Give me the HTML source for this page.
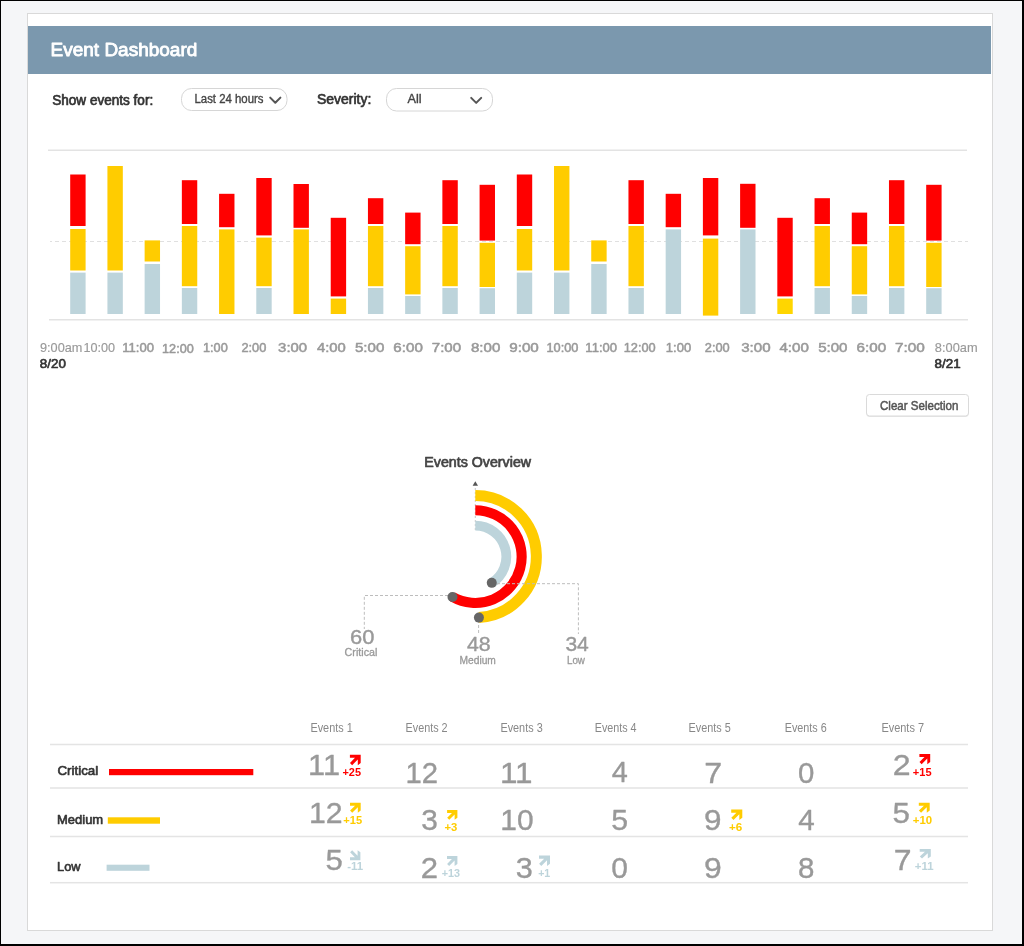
<!DOCTYPE html>
<html><head><meta charset="utf-8"><title>Event Dashboard</title>
<style>html,body{margin:0;padding:0;background:#f5f6f8;width:1024px;height:946px;overflow:hidden;font-family:"Liberation Sans", sans-serif}</style>
</head><body>
<svg width="1024" height="946" viewBox="0 0 1024 946" style="display:block;will-change:transform">
<rect x="0" y="0" width="1024" height="946" fill="#000"/>
<rect x="1" y="1" width="1021" height="943" fill="#f5f6f8"/>
<rect x="27.5" y="13.5" width="965" height="917" fill="#fff" stroke="#d9d9d9" stroke-width="1"/>
<rect x="28" y="26" width="963" height="48" fill="#7b98ae"/>
<g font-family="&quot;Liberation Sans&quot;, sans-serif">
<text x="50.54" y="55.70" font-size="17.8" fill="#fff" font-weight="normal" textLength="146.78" lengthAdjust="spacingAndGlyphs"  stroke="#fff" stroke-width="0.8" stroke-linejoin="round">Event Dashboard</text>
<text x="52.23" y="104.55" font-size="14.0" fill="#333" font-weight="normal" textLength="100.95" lengthAdjust="spacingAndGlyphs"  stroke="#333" stroke-width="0.7" stroke-linejoin="round">Show events for:</text>
<rect x="181.5" y="88.5" width="105.5" height="22" rx="10" fill="#fff" stroke="#d6d6d6"/>
<text x="194.49" y="103.03" font-size="12.3" fill="#444" font-weight="normal" textLength="69.00" lengthAdjust="spacingAndGlyphs"  stroke="#444" stroke-width="0.35" stroke-linejoin="round">Last 24 hours</text>
<path d="M270.2 97.6 L275.3 102.8 L280.4 97.6" fill="none" stroke="#555" stroke-width="2" stroke-linecap="round" stroke-linejoin="round"/>
<text x="317.02" y="104.25" font-size="14.0" fill="#333" font-weight="normal" textLength="54.31" lengthAdjust="spacingAndGlyphs"  stroke="#333" stroke-width="0.7" stroke-linejoin="round">Severity:</text>
<rect x="386.5" y="88.5" width="106" height="22.5" rx="10" fill="#fff" stroke="#d6d6d6"/>
<text x="407.50" y="103.33" font-size="12.3" fill="#444" font-weight="normal" textLength="14.13" lengthAdjust="spacingAndGlyphs"  stroke="#444" stroke-width="0.35" stroke-linejoin="round">All</text>
<path d="M471.2 97.9 L476.2 102.9 L481.2 97.9" fill="none" stroke="#555" stroke-width="2" stroke-linecap="round" stroke-linejoin="round"/>
<rect x="48" y="149.5" width="919" height="1.5" fill="#e3e3e3"/>
<line x1="50" y1="241.5" x2="968" y2="241.5" stroke="#e0e0e0" stroke-width="1" stroke-dasharray="4 3" stroke-dashoffset="2"/>
<rect x="49" y="319" width="919" height="1.5" fill="#e3e3e3"/>
<rect x="70.20" y="174.5" width="15.4" height="51.50" fill="#ff0000"/>
<rect x="70.20" y="229" width="15.4" height="41.50" fill="#ffcc00"/>
<rect x="70.20" y="272.6" width="15.4" height="41.40" fill="#bdd4db"/>
<rect x="107.42" y="166" width="15.4" height="104.50" fill="#ffcc00"/>
<rect x="107.42" y="272.6" width="15.4" height="41.40" fill="#bdd4db"/>
<rect x="144.63" y="240.4" width="15.4" height="21.10" fill="#ffcc00"/>
<rect x="144.63" y="264" width="15.4" height="50.00" fill="#bdd4db"/>
<rect x="181.85" y="180.2" width="15.4" height="43.80" fill="#ff0000"/>
<rect x="181.85" y="226" width="15.4" height="60.20" fill="#ffcc00"/>
<rect x="181.85" y="288" width="15.4" height="26.00" fill="#bdd4db"/>
<rect x="219.07" y="193.8" width="15.4" height="33.40" fill="#ff0000"/>
<rect x="219.07" y="229.4" width="15.4" height="84.60" fill="#ffcc00"/>
<rect x="256.28" y="178" width="15.4" height="57.40" fill="#ff0000"/>
<rect x="256.28" y="237.6" width="15.4" height="48.60" fill="#ffcc00"/>
<rect x="256.28" y="288" width="15.4" height="26.00" fill="#bdd4db"/>
<rect x="293.50" y="184" width="15.4" height="43.80" fill="#ff0000"/>
<rect x="293.50" y="229.4" width="15.4" height="84.60" fill="#ffcc00"/>
<rect x="330.72" y="217.8" width="15.4" height="78.60" fill="#ff0000"/>
<rect x="330.72" y="298.6" width="15.4" height="15.40" fill="#ffcc00"/>
<rect x="367.94" y="198.2" width="15.4" height="25.80" fill="#ff0000"/>
<rect x="367.94" y="226" width="15.4" height="60.20" fill="#ffcc00"/>
<rect x="367.94" y="288" width="15.4" height="26.00" fill="#bdd4db"/>
<rect x="405.15" y="212.6" width="15.4" height="31.60" fill="#ff0000"/>
<rect x="405.15" y="246.2" width="15.4" height="48.20" fill="#ffcc00"/>
<rect x="405.15" y="296" width="15.4" height="18.00" fill="#bdd4db"/>
<rect x="442.37" y="180.2" width="15.4" height="43.80" fill="#ff0000"/>
<rect x="442.37" y="226" width="15.4" height="60.20" fill="#ffcc00"/>
<rect x="442.37" y="288" width="15.4" height="26.00" fill="#bdd4db"/>
<rect x="479.59" y="184.8" width="15.4" height="55.80" fill="#ff0000"/>
<rect x="479.59" y="242.8" width="15.4" height="44.20" fill="#ffcc00"/>
<rect x="479.59" y="288.2" width="15.4" height="25.80" fill="#bdd4db"/>
<rect x="516.80" y="174.5" width="15.4" height="51.50" fill="#ff0000"/>
<rect x="516.80" y="229" width="15.4" height="41.50" fill="#ffcc00"/>
<rect x="516.80" y="272.6" width="15.4" height="41.40" fill="#bdd4db"/>
<rect x="554.02" y="166" width="15.4" height="104.50" fill="#ffcc00"/>
<rect x="554.02" y="272.6" width="15.4" height="41.40" fill="#bdd4db"/>
<rect x="591.24" y="240.4" width="15.4" height="21.10" fill="#ffcc00"/>
<rect x="591.24" y="264" width="15.4" height="50.00" fill="#bdd4db"/>
<rect x="628.46" y="180.2" width="15.4" height="43.80" fill="#ff0000"/>
<rect x="628.46" y="226" width="15.4" height="60.20" fill="#ffcc00"/>
<rect x="628.46" y="288" width="15.4" height="26.00" fill="#bdd4db"/>
<rect x="665.67" y="193.8" width="15.4" height="33.40" fill="#ff0000"/>
<rect x="665.67" y="229.4" width="15.4" height="84.60" fill="#bdd4db"/>
<rect x="702.89" y="178" width="15.4" height="57.40" fill="#ff0000"/>
<rect x="702.89" y="238.6" width="15.4" height="77.00" fill="#ffcc00"/>
<rect x="740.11" y="183.8" width="15.4" height="44.00" fill="#ff0000"/>
<rect x="740.11" y="229.4" width="15.4" height="84.60" fill="#bdd4db"/>
<rect x="777.32" y="217.8" width="15.4" height="78.60" fill="#ff0000"/>
<rect x="777.32" y="298.6" width="15.4" height="15.40" fill="#ffd600"/>
<rect x="814.54" y="198.2" width="15.4" height="25.80" fill="#ff0000"/>
<rect x="814.54" y="226" width="15.4" height="60.20" fill="#ffcc00"/>
<rect x="814.54" y="288" width="15.4" height="26.00" fill="#bdd4db"/>
<rect x="851.76" y="212.6" width="15.4" height="31.60" fill="#ff0000"/>
<rect x="851.76" y="246.2" width="15.4" height="48.20" fill="#ffcc00"/>
<rect x="851.76" y="296" width="15.4" height="18.00" fill="#bdd4db"/>
<rect x="888.97" y="180.2" width="15.4" height="43.80" fill="#ff0000"/>
<rect x="888.97" y="226" width="15.4" height="60.20" fill="#ffcc00"/>
<rect x="888.97" y="288" width="15.4" height="26.00" fill="#bdd4db"/>
<rect x="926.19" y="184.8" width="15.4" height="55.80" fill="#ff0000"/>
<rect x="926.19" y="242.8" width="15.4" height="44.20" fill="#ffcc00"/>
<rect x="926.19" y="288.2" width="15.4" height="25.80" fill="#bdd4db"/>
<text x="40.03" y="352.12" font-size="12.4" fill="#9a9a9a" font-weight="normal" textLength="42.38" lengthAdjust="spacingAndGlyphs"  stroke="#9a9a9a" stroke-width="0.15" stroke-linejoin="round">9:00am</text>
<text x="83.56" y="352.12" font-size="12.4" fill="#9a9a9a" font-weight="normal" textLength="31.61" lengthAdjust="spacingAndGlyphs"  stroke="#9a9a9a" stroke-width="0.15" stroke-linejoin="round">10:00</text>
<text x="122.18" y="351.95" font-size="12.4" fill="#999" font-weight="normal" textLength="31.76" lengthAdjust="spacingAndGlyphs"  stroke="#999" stroke-width="0.5" stroke-linejoin="round">11:00</text>
<text x="162.09" y="353.15" font-size="12.4" fill="#999" font-weight="normal" textLength="31.66" lengthAdjust="spacingAndGlyphs"  stroke="#999" stroke-width="0.5" stroke-linejoin="round">12:00</text>
<text x="202.98" y="351.95" font-size="12.4" fill="#999" font-weight="normal" textLength="24.77" lengthAdjust="spacingAndGlyphs"  stroke="#999" stroke-width="0.5" stroke-linejoin="round">1:00</text>
<text x="241.41" y="351.95" font-size="12.4" fill="#999" font-weight="normal" textLength="24.95" lengthAdjust="spacingAndGlyphs"  stroke="#999" stroke-width="0.5" stroke-linejoin="round">2:00</text>
<text x="278.08" y="351.95" font-size="12.4" fill="#999" font-weight="normal" textLength="29.05" lengthAdjust="spacingAndGlyphs"  stroke="#999" stroke-width="0.5" stroke-linejoin="round">3:00</text>
<text x="316.91" y="351.95" font-size="12.4" fill="#999" font-weight="normal" textLength="28.82" lengthAdjust="spacingAndGlyphs"  stroke="#999" stroke-width="0.5" stroke-linejoin="round">4:00</text>
<text x="354.95" y="351.95" font-size="12.4" fill="#999" font-weight="normal" textLength="29.39" lengthAdjust="spacingAndGlyphs"  stroke="#999" stroke-width="0.5" stroke-linejoin="round">5:00</text>
<text x="393.38" y="351.95" font-size="12.4" fill="#999" font-weight="normal" textLength="29.46" lengthAdjust="spacingAndGlyphs"  stroke="#999" stroke-width="0.5" stroke-linejoin="round">6:00</text>
<text x="431.78" y="351.95" font-size="12.4" fill="#999" font-weight="normal" textLength="29.36" lengthAdjust="spacingAndGlyphs"  stroke="#999" stroke-width="0.5" stroke-linejoin="round">7:00</text>
<text x="470.99" y="351.95" font-size="12.4" fill="#999" font-weight="normal" textLength="29.34" lengthAdjust="spacingAndGlyphs"  stroke="#999" stroke-width="0.5" stroke-linejoin="round">8:00</text>
<text x="509.24" y="351.95" font-size="12.4" fill="#999" font-weight="normal" textLength="29.61" lengthAdjust="spacingAndGlyphs"  stroke="#999" stroke-width="0.5" stroke-linejoin="round">9:00</text>
<text x="546.48" y="351.95" font-size="12.4" fill="#999" font-weight="normal" textLength="31.97" lengthAdjust="spacingAndGlyphs"  stroke="#999" stroke-width="0.5" stroke-linejoin="round">10:00</text>
<text x="585.39" y="351.95" font-size="12.4" fill="#999" font-weight="normal" textLength="31.66" lengthAdjust="spacingAndGlyphs"  stroke="#999" stroke-width="0.5" stroke-linejoin="round">11:00</text>
<text x="623.78" y="351.95" font-size="12.4" fill="#999" font-weight="normal" textLength="31.97" lengthAdjust="spacingAndGlyphs"  stroke="#999" stroke-width="0.5" stroke-linejoin="round">12:00</text>
<text x="665.76" y="351.95" font-size="12.4" fill="#999" font-weight="normal" textLength="25.40" lengthAdjust="spacingAndGlyphs"  stroke="#999" stroke-width="0.5" stroke-linejoin="round">1:00</text>
<text x="704.81" y="351.95" font-size="12.4" fill="#999" font-weight="normal" textLength="24.95" lengthAdjust="spacingAndGlyphs"  stroke="#999" stroke-width="0.5" stroke-linejoin="round">2:00</text>
<text x="741.18" y="351.95" font-size="12.4" fill="#999" font-weight="normal" textLength="29.36" lengthAdjust="spacingAndGlyphs"  stroke="#999" stroke-width="0.5" stroke-linejoin="round">3:00</text>
<text x="779.40" y="351.95" font-size="12.4" fill="#999" font-weight="normal" textLength="29.44" lengthAdjust="spacingAndGlyphs"  stroke="#999" stroke-width="0.5" stroke-linejoin="round">4:00</text>
<text x="818.15" y="351.95" font-size="12.4" fill="#999" font-weight="normal" textLength="29.39" lengthAdjust="spacingAndGlyphs"  stroke="#999" stroke-width="0.5" stroke-linejoin="round">5:00</text>
<text x="856.58" y="351.95" font-size="12.4" fill="#999" font-weight="normal" textLength="29.67" lengthAdjust="spacingAndGlyphs"  stroke="#999" stroke-width="0.5" stroke-linejoin="round">6:00</text>
<text x="894.96" y="351.95" font-size="12.4" fill="#999" font-weight="normal" textLength="29.89" lengthAdjust="spacingAndGlyphs"  stroke="#999" stroke-width="0.5" stroke-linejoin="round">7:00</text>
<text x="934.87" y="352.12" font-size="12.4" fill="#9a9a9a" font-weight="normal" textLength="42.75" lengthAdjust="spacingAndGlyphs"  stroke="#9a9a9a" stroke-width="0.15" stroke-linejoin="round">8:00am</text>
<text x="39.79" y="367.68" font-size="12.8" fill="#333" font-weight="normal" textLength="26.05" lengthAdjust="spacingAndGlyphs"  stroke="#333" stroke-width="0.65" stroke-linejoin="round">8/20</text>
<text x="934.59" y="367.68" font-size="12.8" fill="#333" font-weight="normal" textLength="26.09" lengthAdjust="spacingAndGlyphs"  stroke="#333" stroke-width="0.65" stroke-linejoin="round">8/21</text>
<rect x="866.5" y="395" width="102" height="22" rx="3" fill="#e8e8e8"/>
<rect x="866.5" y="394.5" width="102" height="21.5" rx="3" fill="#fff" stroke="#dadada"/>
<text x="879.96" y="410.05" font-size="12.6" fill="#555" font-weight="normal" textLength="78.44" lengthAdjust="spacingAndGlyphs"  stroke="#555" stroke-width="0.5" stroke-linejoin="round">Clear Selection</text>
<text x="424.28" y="466.65" font-size="14.0" fill="#444" font-weight="normal" textLength="106.83" lengthAdjust="spacingAndGlyphs"  stroke="#444" stroke-width="0.7" stroke-linejoin="round">Events Overview</text>
<line x1="475.3" y1="488" x2="475.3" y2="531" stroke="#c8c8c8" stroke-width="1" stroke-dasharray="2 2"/>
<path d="M475.3 481.3 L478 485.7 L472.6 485.7 Z" fill="#555"/>
<path d="M475.3 495.50 A61.1 61.1 0 0 1 478.92 617.59" fill="none" stroke="#ffcc00" stroke-width="11"/>
<path d="M475.3 510.25 A46.35 46.35 0 1 1 452.48 596.94" fill="none" stroke="#ff0000" stroke-width="10.1"/>
<path d="M475.3 525.60 A31 31 0 0 1 491.77 582.86" fill="none" stroke="#bdd4db" stroke-width="9.8"/>
<path d="M448 595.5 H364.3 V629" fill="none" stroke="#bdbdbd" stroke-width="1" stroke-dasharray="3 2"/>
<path d="M497 583.7 H578.4 V634" fill="none" stroke="#bdbdbd" stroke-width="1" stroke-dasharray="3 2"/>
<path d="M478.6 620 V634" fill="none" stroke="#bdbdbd" stroke-width="1" stroke-dasharray="3 2"/>
<circle cx="478.92" cy="617.59" r="5" fill="#666"/>
<circle cx="452.48" cy="596.94" r="5" fill="#666"/>
<circle cx="491.77" cy="582.86" r="5" fill="#666"/>
<text x="350.09" y="644.20" font-size="20.4" fill="#999" font-weight="normal" textLength="24.37" lengthAdjust="spacingAndGlyphs"  stroke="#999" stroke-width="0.4" stroke-linejoin="round">60</text>
<text x="344.61" y="656.25" font-size="10.5" fill="#999" font-weight="normal" textLength="32.76" lengthAdjust="spacingAndGlyphs"  stroke="#999" stroke-width="0.3" stroke-linejoin="round">Critical</text>
<text x="466.91" y="651.10" font-size="20.4" fill="#999" font-weight="normal" textLength="23.72" lengthAdjust="spacingAndGlyphs"  stroke="#999" stroke-width="0.4" stroke-linejoin="round">48</text>
<text x="459.51" y="663.55" font-size="10.5" fill="#999" font-weight="normal" textLength="36.41" lengthAdjust="spacingAndGlyphs"  stroke="#999" stroke-width="0.3" stroke-linejoin="round">Medium</text>
<text x="565.40" y="651.10" font-size="20.4" fill="#999" font-weight="normal" textLength="23.42" lengthAdjust="spacingAndGlyphs"  stroke="#999" stroke-width="0.4" stroke-linejoin="round">34</text>
<text x="566.95" y="663.85" font-size="10.5" fill="#999" font-weight="normal" textLength="17.98" lengthAdjust="spacingAndGlyphs"  stroke="#999" stroke-width="0.3" stroke-linejoin="round">Low</text>
<rect x="50" y="743.75" width="918" height="1.5" fill="#e4e4e4"/>
<rect x="50" y="787.25" width="918" height="1.5" fill="#e4e4e4"/>
<rect x="50" y="835.75" width="918" height="1.5" fill="#e4e4e4"/>
<rect x="50" y="881.95" width="918" height="1.5" fill="#e4e4e4"/>
<text x="310.41" y="731.90" font-size="12" fill="#888" font-weight="normal" textLength="42.32" lengthAdjust="spacingAndGlyphs" >Events 1</text>
<text x="405.51" y="731.90" font-size="12" fill="#888" font-weight="normal" textLength="42.13" lengthAdjust="spacingAndGlyphs" >Events 2</text>
<text x="500.41" y="731.90" font-size="12" fill="#888" font-weight="normal" textLength="42.27" lengthAdjust="spacingAndGlyphs" >Events 3</text>
<text x="594.72" y="731.90" font-size="12" fill="#888" font-weight="normal" textLength="41.90" lengthAdjust="spacingAndGlyphs" >Events 4</text>
<text x="688.51" y="731.90" font-size="12" fill="#888" font-weight="normal" textLength="42.25" lengthAdjust="spacingAndGlyphs" >Events 5</text>
<text x="784.71" y="731.90" font-size="12" fill="#888" font-weight="normal" textLength="42.06" lengthAdjust="spacingAndGlyphs" >Events 6</text>
<text x="881.40" y="731.90" font-size="12" fill="#888" font-weight="normal" textLength="42.65" lengthAdjust="spacingAndGlyphs" >Events 7</text>
<text x="57.40" y="774.88" font-size="13.3" fill="#333" font-weight="normal" textLength="40.82" lengthAdjust="spacingAndGlyphs"  stroke="#333" stroke-width="0.65" stroke-linejoin="round">Critical</text>
<text x="57.01" y="823.67" font-size="13.3" fill="#333" font-weight="normal" textLength="46.17" lengthAdjust="spacingAndGlyphs"  stroke="#333" stroke-width="0.65" stroke-linejoin="round">Medium</text>
<text x="57.03" y="870.88" font-size="13.3" fill="#333" font-weight="normal" textLength="23.47" lengthAdjust="spacingAndGlyphs"  stroke="#333" stroke-width="0.65" stroke-linejoin="round">Low</text>
<rect x="109" y="769" width="144.3" height="6.2" fill="#ff0000"/>
<rect x="107.8" y="817.3" width="52.2" height="6.4" fill="#ffcc00"/>
<rect x="106.6" y="864.7" width="42.9" height="6.1" fill="#bdd4db"/>
<text x="308.14" y="775.43" font-size="29.6" fill="#999" font-weight="normal" textLength="31.94" lengthAdjust="spacingAndGlyphs"  stroke="#999" stroke-width="0.35" stroke-linejoin="round">11</text>
<text x="405.50" y="782.73" font-size="29.6" fill="#999" font-weight="normal" textLength="32.55" lengthAdjust="spacingAndGlyphs"  stroke="#999" stroke-width="0.35" stroke-linejoin="round">12</text>
<text x="499.99" y="782.73" font-size="29.6" fill="#999" font-weight="normal" textLength="32.62" lengthAdjust="spacingAndGlyphs"  stroke="#999" stroke-width="0.35" stroke-linejoin="round">11</text>
<text x="611.76" y="782.43" font-size="29.6" fill="#999" font-weight="normal" textLength="16.06" lengthAdjust="spacingAndGlyphs"  stroke="#999" stroke-width="0.35" stroke-linejoin="round">4</text>
<text x="704.27" y="782.83" font-size="29.6" fill="#999" font-weight="normal" textLength="17.92" lengthAdjust="spacingAndGlyphs"  stroke="#999" stroke-width="0.35" stroke-linejoin="round">7</text>
<text x="797.98" y="782.83" font-size="29.6" fill="#999" font-weight="normal" textLength="16.35" lengthAdjust="spacingAndGlyphs"  stroke="#999" stroke-width="0.35" stroke-linejoin="round">0</text>
<text x="892.81" y="775.43" font-size="29.6" fill="#999" font-weight="normal" textLength="17.88" lengthAdjust="spacingAndGlyphs"  stroke="#999" stroke-width="0.35" stroke-linejoin="round">2</text>
<text x="309.02" y="823.43" font-size="29.6" fill="#999" font-weight="normal" textLength="33.68" lengthAdjust="spacingAndGlyphs"  stroke="#999" stroke-width="0.35" stroke-linejoin="round">12</text>
<text x="421.29" y="830.03" font-size="29.6" fill="#999" font-weight="normal" textLength="16.60" lengthAdjust="spacingAndGlyphs"  stroke="#999" stroke-width="0.35" stroke-linejoin="round">3</text>
<text x="500.34" y="830.23" font-size="29.6" fill="#999" font-weight="normal" textLength="33.30" lengthAdjust="spacingAndGlyphs"  stroke="#999" stroke-width="0.35" stroke-linejoin="round">10</text>
<text x="611.21" y="829.83" font-size="29.6" fill="#999" font-weight="normal" textLength="16.83" lengthAdjust="spacingAndGlyphs"  stroke="#999" stroke-width="0.35" stroke-linejoin="round">5</text>
<text x="703.95" y="829.83" font-size="29.6" fill="#999" font-weight="normal" textLength="17.52" lengthAdjust="spacingAndGlyphs"  stroke="#999" stroke-width="0.35" stroke-linejoin="round">9</text>
<text x="798.14" y="829.83" font-size="29.6" fill="#999" font-weight="normal" textLength="16.50" lengthAdjust="spacingAndGlyphs"  stroke="#999" stroke-width="0.35" stroke-linejoin="round">4</text>
<text x="892.57" y="823.43" font-size="29.6" fill="#999" font-weight="normal" textLength="17.42" lengthAdjust="spacingAndGlyphs"  stroke="#999" stroke-width="0.35" stroke-linejoin="round">5</text>
<text x="325.58" y="870.23" font-size="29.6" fill="#999" font-weight="normal" textLength="17.30" lengthAdjust="spacingAndGlyphs"  stroke="#999" stroke-width="0.35" stroke-linejoin="round">5</text>
<text x="420.86" y="877.62" font-size="29.6" fill="#999" font-weight="normal" textLength="17.27" lengthAdjust="spacingAndGlyphs"  stroke="#999" stroke-width="0.35" stroke-linejoin="round">2</text>
<text x="515.76" y="877.62" font-size="29.6" fill="#999" font-weight="normal" textLength="17.07" lengthAdjust="spacingAndGlyphs"  stroke="#999" stroke-width="0.35" stroke-linejoin="round">3</text>
<text x="611.25" y="877.62" font-size="29.6" fill="#999" font-weight="normal" textLength="16.70" lengthAdjust="spacingAndGlyphs"  stroke="#999" stroke-width="0.35" stroke-linejoin="round">0</text>
<text x="703.93" y="877.62" font-size="29.6" fill="#999" font-weight="normal" textLength="17.76" lengthAdjust="spacingAndGlyphs"  stroke="#999" stroke-width="0.35" stroke-linejoin="round">9</text>
<text x="798.04" y="877.62" font-size="29.6" fill="#999" font-weight="normal" textLength="16.42" lengthAdjust="spacingAndGlyphs"  stroke="#999" stroke-width="0.35" stroke-linejoin="round">8</text>
<text x="893.78" y="870.23" font-size="29.6" fill="#999" font-weight="normal" textLength="17.80" lengthAdjust="spacingAndGlyphs"  stroke="#999" stroke-width="0.35" stroke-linejoin="round">7</text>
<polygon points="349.90,754.70 360.70,754.70 360.70,763.00 357.80,765.20 357.80,759.39 352.15,765.20 349.99,762.98 354.97,757.85 349.90,757.85" fill="#ff0000"/>
<text x="342.44" y="775.60" font-size="10.4" fill="#ff0000" font-weight="bold" textLength="18.56" lengthAdjust="spacingAndGlyphs" >+25</text>
<polygon points="350.00,802.80 360.70,802.80 360.70,810.62 357.82,812.70 357.82,807.23 352.23,812.70 350.09,810.61 355.03,805.77 350.00,805.77" fill="#ffcc00"/>
<text x="343.33" y="823.80" font-size="10.4" fill="#ffcc00" font-weight="bold" textLength="18.88" lengthAdjust="spacingAndGlyphs" >+15</text>
<polygon points="350.00,860.30 360.40,860.30 360.40,852.32 357.60,850.20 357.60,855.79 352.17,850.20 350.09,852.33 354.89,857.27 350.00,857.27" fill="#bdd4db"/>
<text x="347.17" y="870.40" font-size="10.4" fill="#bdd4db" font-weight="bold" textLength="15.94" lengthAdjust="spacingAndGlyphs" >-11</text>
<polygon points="447.10,810.00 457.40,810.00 457.40,817.74 454.63,819.80 454.63,814.38 449.25,819.80 447.19,817.73 451.94,812.94 447.10,812.94" fill="#ffcc00"/>
<text x="444.53" y="830.80" font-size="10.4" fill="#ffcc00" font-weight="bold" textLength="12.88" lengthAdjust="spacingAndGlyphs" >+3</text>
<polygon points="447.00,856.10 457.40,856.10 457.40,863.92 454.60,866.00 454.60,860.53 449.17,866.00 447.09,863.91 451.89,859.07 447.00,859.07" fill="#bdd4db"/>
<text x="441.65" y="877.00" font-size="10.4" fill="#bdd4db" font-weight="bold" textLength="18.34" lengthAdjust="spacingAndGlyphs" >+13</text>
<polygon points="539.00,855.50 550.00,855.50 550.00,863.79 547.04,866.00 547.04,860.19 541.29,866.00 539.09,863.78 544.17,858.65 539.00,858.65" fill="#bdd4db"/>
<text x="538.15" y="877.00" font-size="10.4" fill="#bdd4db" font-weight="bold" textLength="12.14" lengthAdjust="spacingAndGlyphs" >+1</text>
<polygon points="731.20,809.50 742.30,809.50 742.30,817.79 739.32,820.00 739.32,814.19 733.51,820.00 731.29,817.78 736.41,812.65 731.20,812.65" fill="#ffcc00"/>
<text x="729.01" y="830.80" font-size="10.4" fill="#ffcc00" font-weight="bold" textLength="13.31" lengthAdjust="spacingAndGlyphs" >+6</text>
<polygon points="919.40,754.00 930.20,754.00 930.20,762.06 927.30,764.20 927.30,758.56 921.65,764.20 919.49,762.05 924.47,757.06 919.40,757.06" fill="#ff0000"/>
<text x="912.84" y="775.60" font-size="10.4" fill="#ff0000" font-weight="bold" textLength="18.77" lengthAdjust="spacingAndGlyphs" >+15</text>
<polygon points="918.80,802.70 929.70,802.70 929.70,810.60 926.77,812.70 926.77,807.17 921.07,812.70 918.89,810.59 923.92,805.70 918.80,805.70" fill="#ffcc00"/>
<text x="912.82" y="823.80" font-size="10.4" fill="#ffcc00" font-weight="bold" textLength="19.35" lengthAdjust="spacingAndGlyphs" >+10</text>
<polygon points="919.70,848.90 930.80,848.90 930.80,856.40 927.82,858.40 927.82,853.15 922.01,858.40 919.79,856.40 924.91,851.75 919.70,851.75" fill="#bdd4db"/>
<text x="914.74" y="870.40" font-size="10.4" fill="#bdd4db" font-weight="bold" textLength="18.77" lengthAdjust="spacingAndGlyphs" >+11</text>
</g>
</svg>
</body></html>
